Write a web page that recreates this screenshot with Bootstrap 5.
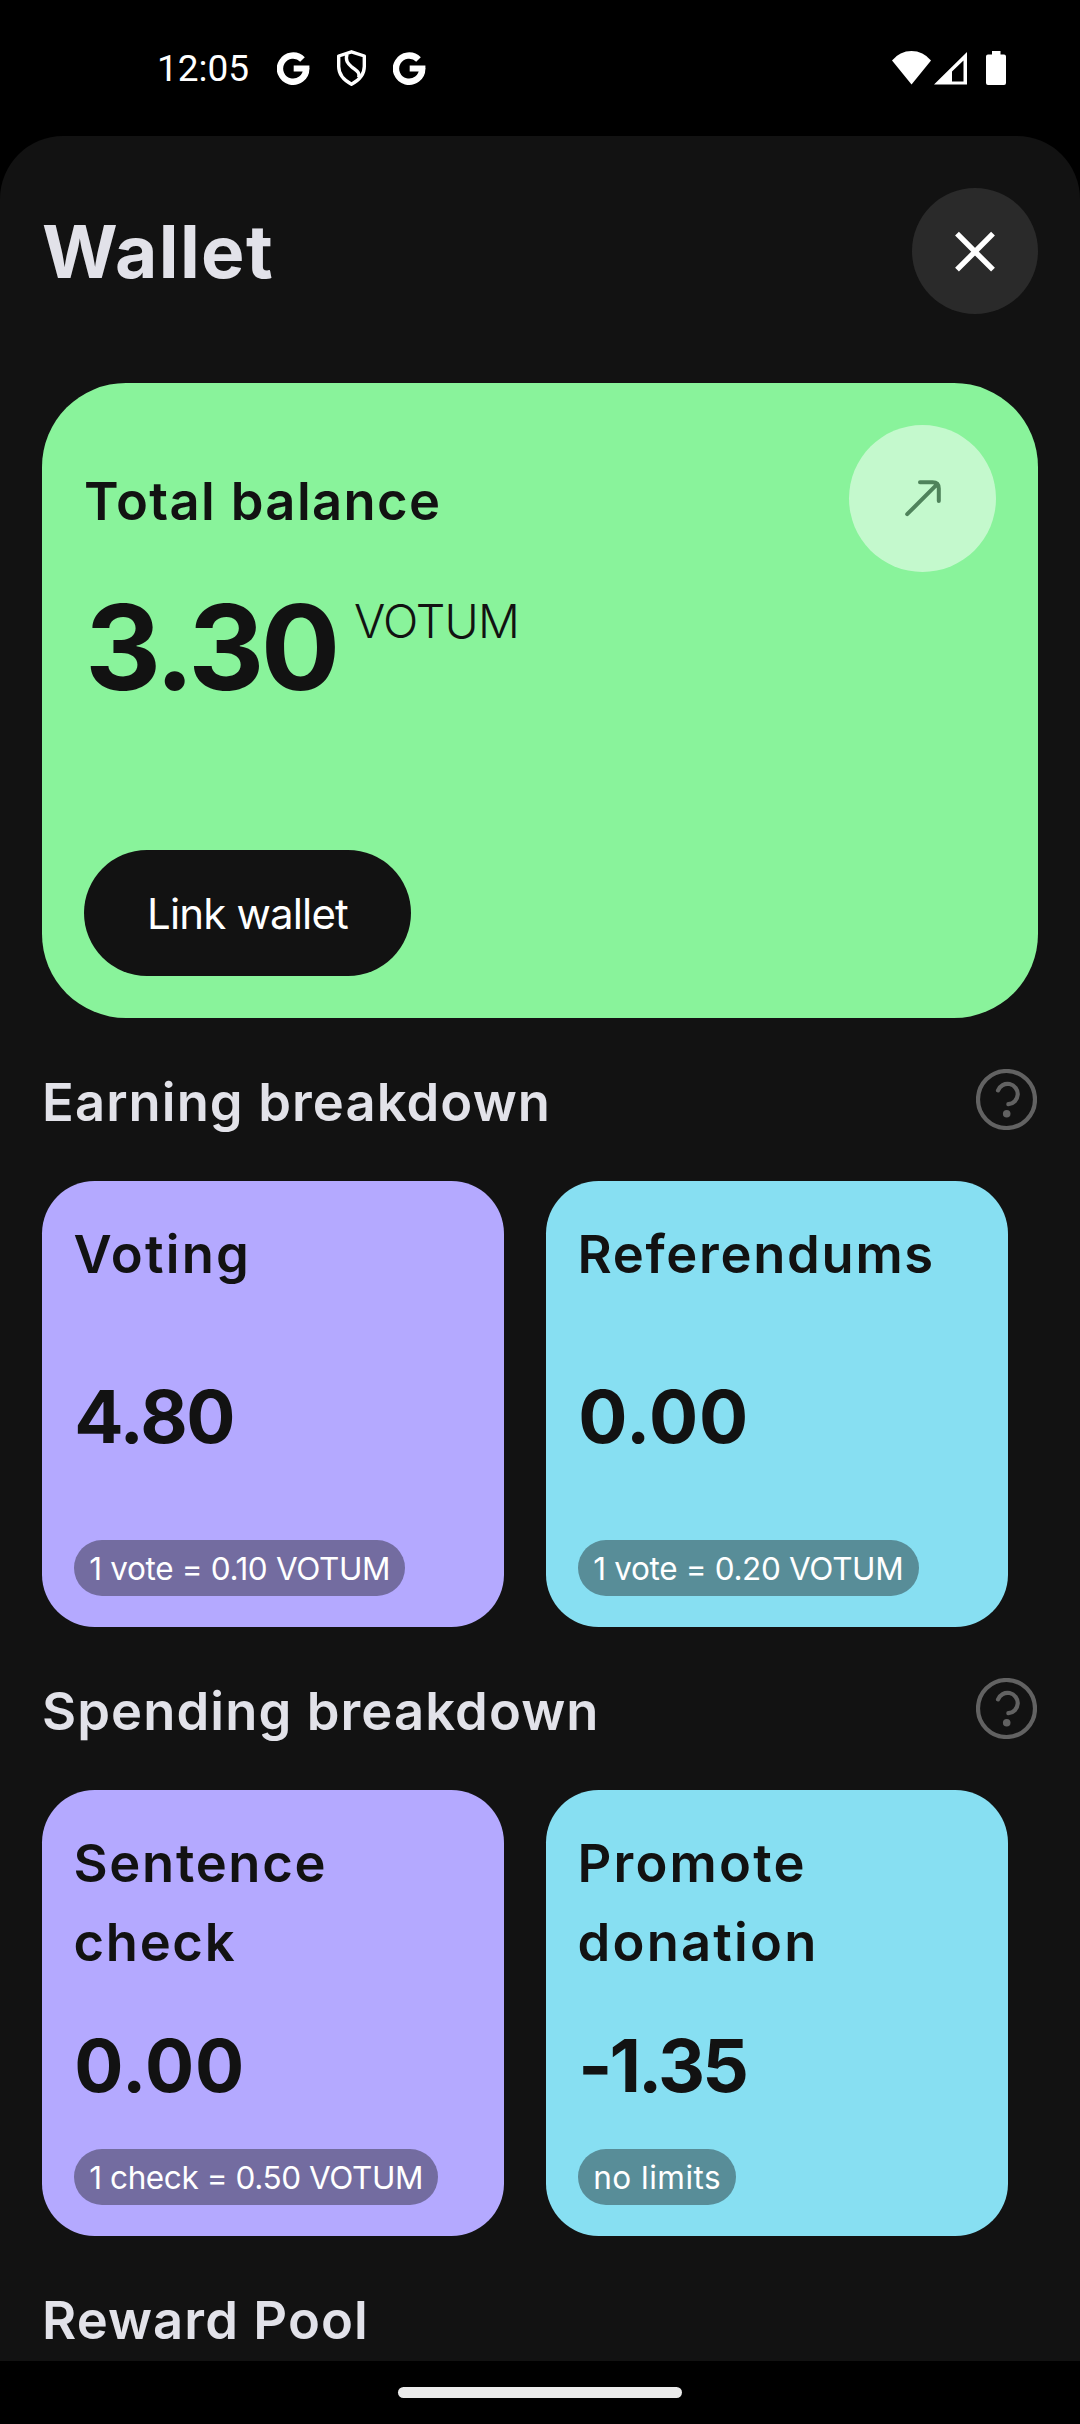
<!DOCTYPE html>
<html lang="en">
<head>
<meta charset="utf-8">
<meta name="viewport" content="width=device-width, initial-scale=1">
<title>Wallet</title>
<link href="https://cdn.jsdelivr.net/npm/bootstrap@5.3.0/dist/css/bootstrap.min.css" rel="stylesheet">
<style>
  html, body { height: 2424px; }
  body { margin: 0; background: #000; color: #e2e2e9; font-family: Inter, "Liberation Sans", sans-serif; overflow: hidden; }
  svg { display: block; flex: none; }
  .screen { width: 1080px; height: 2424px; }
  .status { height: 136px; padding: 0 74px 0 157px; color: #fff; flex: none; }
  .clock { font: 400 37px/40px Roboto, sans-serif; width: 119.5px; padding-top: 2px; }
  .ico-gap { margin-left: 25.200px; }
  .signal { margin-left: 3px; }
  .battery { margin-left: 19px; }
  .sheet { background: #121212; border-radius: 63px 63px 0 0; padding: 52px 42px 0; min-height: 0; }
  .title { font-size: 73px; line-height: 80px; font-weight: 700; letter-spacing: 1.4px; padding-top: 2px; }
  .close-btn { width: 126px; height: 126px; background: #2a2a2a; }
  .balance { height: 635px; margin-top: 69px; padding: 42px; border-radius: 84px; background: #89f39b; color: #121212; border: 0; flex: none; }
  .balance-title { font-size: 52.5px; line-height: 64px; font-weight: 600; letter-spacing: 1.38px; padding-top: 5px; }
  .arrow-btn { width: 147px; height: 147px; background: rgba(255,255,255,.5); }
  .amount { font-size: 118px; line-height: 118px; font-weight: 700; letter-spacing: -3.6px; padding-left: 1px; }
  .unit { font-size: 46.5px; line-height: 56px; font-weight: 300; letter-spacing: -.8px; margin: 5px 0 0 17.3px; }
  .link-btn { width: 327px; height: 126px; background: #121212; color: #fff; font-size: 42px; letter-spacing: -.84px; border: 0; }
  .section-head { height: 163px; flex: none; padding-right: 1px; }
  .section-head h2 { font-size: 52.5px; line-height: 64px; font-weight: 600; letter-spacing: 1.1px; padding-top: 4px; }
  .tiles { gap: 42px; flex: none; }
  .tile { width: 462px; height: 446px; border: 0; border-radius: 52.5px; padding: 34.4px 31.5px 31px; color: #121212; }
  .violet { background: #b4a9ff; }
  .sky { background: #87dff2; }
  .tile-name { font-size: 52.5px; line-height: 79px; font-weight: 600; letter-spacing: 1.7px; }
  .roomy { letter-spacing: 2.2px; }
  .tile-sum { font-size: 73px; line-height: 80px; font-weight: 700; letter-spacing: .7px; padding-left: .8px; }
  .chip { height: 55.5px; padding: 0 15.2px 0 15.75px; background: rgba(18,18,18,.4); color: #fff; font-size: 31.5px; letter-spacing: -.35px; white-space: nowrap; }
  .tight-sum { letter-spacing: -1.6px; }
  .neg-sum { letter-spacing: -2.9px; }
  .tight-chip { letter-spacing: -.42px; }
  .wide-chip { letter-spacing: .5px; }
  .gesture { height: 63px; flex: none; background: #000; }
  .gesture-pill { width: 284px; height: 11px; border-radius: 5.5px; background: #ebebeb; }
</style>
</head>
<body>
<svg width="0" height="0" class="position-absolute" aria-hidden="true">
  <symbol id="g-mark" viewBox="0 0 33 33"><path d="M25.5 7.500A13.100 13.100 0 1 0 29.200 16.500" fill="none" stroke="#fff" stroke-width="6.400"/><path d="M16.700 13.400H32.400V17L29 19.600H16.700Z" fill="#fff"/></symbol>
  <symbol id="help" viewBox="0 0 61 61"><g fill="none" stroke="#626262" stroke-width="4.200"><circle cx="30.5" cy="30.5" r="28.500"/><path d="M22 21.400A10.200 10.200 0 1 1 32.400 35.200" stroke-linecap="round"/></g><circle cx="30.700" cy="44.800" r="3.800" fill="#626262"/></symbol>
</svg>
<div class="screen d-flex flex-column">
  <header class="status d-flex align-items-center">
    <div class="clock">12:05</div>
    <svg width="33" height="33"><use href="#g-mark"/></svg>
    <svg class="ico-gap" width="33" height="36" viewBox="0 0 33 36" fill="none" stroke="#fff" stroke-width="3.400" stroke-linejoin="round"><path d="M16.500 1.800 29.300 6V16.500C29.300 25 23.500 30.500 16.500 34.200 9.500 30.500 3.700 25 3.700 16.500V6Z"/><path d="M12 4C10.200 10.500 12.500 13.500 17 17.200 22.500 21.500 25 22.500 23.700 27.500"/></svg>
    <svg class="ico-gap" width="33" height="33"><use href="#g-mark"/></svg>
    <div class="ms-auto d-flex align-items-center">
      <svg width="39" height="34" viewBox="0 0 39 34"><path d="M19.500 33.500 0 9.500A24.800 24.800 0 0 1 39 9.500Z" fill="#fff"/></svg>
      <svg class="signal" width="33" height="34" viewBox="0 0 33 34"><path fill-rule="evenodd" d="M0 33.500H33V1ZM18 20.500V30.500H29.500V9.500Z" fill="#fff"/></svg>
      <svg class="battery" width="20" height="34" viewBox="0 0 20 34"><path d="M6 0H14.500V3.500H18Q20 3.500 20 5.500V32Q20 34 18 34H2Q0 34 0 32V5.500Q0 3.500 2 3.500H6Z" fill="#fff"/></svg>
    </div>
  </header>
  <main class="sheet flex-grow-1 d-flex flex-column overflow-hidden">
    <div class="d-flex align-items-center justify-content-between flex-shrink-0">
      <h1 class="title m-0">Wallet</h1>
      <button class="close-btn btn rounded-circle p-0 border-0 d-flex align-items-center justify-content-center" aria-label="Close">
        <svg width="42" height="42" viewBox="0 0 42 42" stroke="#fff" stroke-width="5.400"><path d="M3 3.700 39 39.700M39 3.700 3 39.700"/></svg>
      </button>
    </div>
    <section class="card balance">
      <div class="d-flex align-items-center justify-content-between">
        <div class="balance-title">Total balance</div>
        <div class="arrow-btn rounded-circle d-flex align-items-center justify-content-center">
          <svg width="63" height="63" viewBox="0 0 63 63" fill="none" stroke="#4f835b" stroke-width="4" stroke-linecap="round"><path d="M16.200 47.200 46 17.400M29 15.200H41.500Q47.800 15.200 47.800 21.500V34"/></svg>
        </div>
      </div>
      <div class="d-flex align-items-start mt-3">
        <div class="amount">3.30</div>
        <div class="unit">VOTUM</div>
      </div>
      <button class="link-btn btn rounded-pill mt-auto">Link wallet</button>
    </section>
    <div class="section-head d-flex align-items-center justify-content-between">
      <h2 class="m-0">Earning breakdown</h2>
      <svg width="61" height="61"><use href="#help"/></svg>
    </div>
    <div class="tiles d-flex">
      <div class="card tile violet justify-content-between align-items-start">
        <div class="tile-name roomy">Voting</div>
        <div class="tile-sum tight-sum">4.80</div>
        <div class="chip rounded-pill d-flex align-items-center">1 vote = 0.10 VOTUM</div>
      </div>
      <div class="card tile sky justify-content-between align-items-start">
        <div class="tile-name">Referendums</div>
        <div class="tile-sum">0.00</div>
        <div class="chip rounded-pill d-flex align-items-center">1 vote = 0.20 VOTUM</div>
      </div>
    </div>
    <div class="section-head d-flex align-items-center justify-content-between">
      <h2 class="m-0">Spending breakdown</h2>
      <svg width="61" height="61"><use href="#help"/></svg>
    </div>
    <div class="tiles d-flex">
      <div class="card tile violet justify-content-between align-items-start">
        <div class="tile-name">Sentence<br>check</div>
        <div class="tile-sum">0.00</div>
        <div class="chip tight-chip rounded-pill d-flex align-items-center">1 check = 0.50 VOTUM</div>
      </div>
      <div class="card tile sky justify-content-between align-items-start">
        <div class="tile-name roomy">Promote<br>donation</div>
        <div class="tile-sum neg-sum">-1.35</div>
        <div class="chip wide-chip rounded-pill d-flex align-items-center">no limits</div>
      </div>
    </div>
    <div class="section-head d-flex align-items-center">
      <h2 class="m-0">Reward Pool</h2>
    </div>
  </main>
  <footer class="gesture d-flex align-items-center justify-content-center">
    <div class="gesture-pill"></div>
  </footer>
</div>
<script src="https://cdn.jsdelivr.net/npm/bootstrap@5.3.0/dist/js/bootstrap.bundle.min.js"></script>
</body>
</html>
